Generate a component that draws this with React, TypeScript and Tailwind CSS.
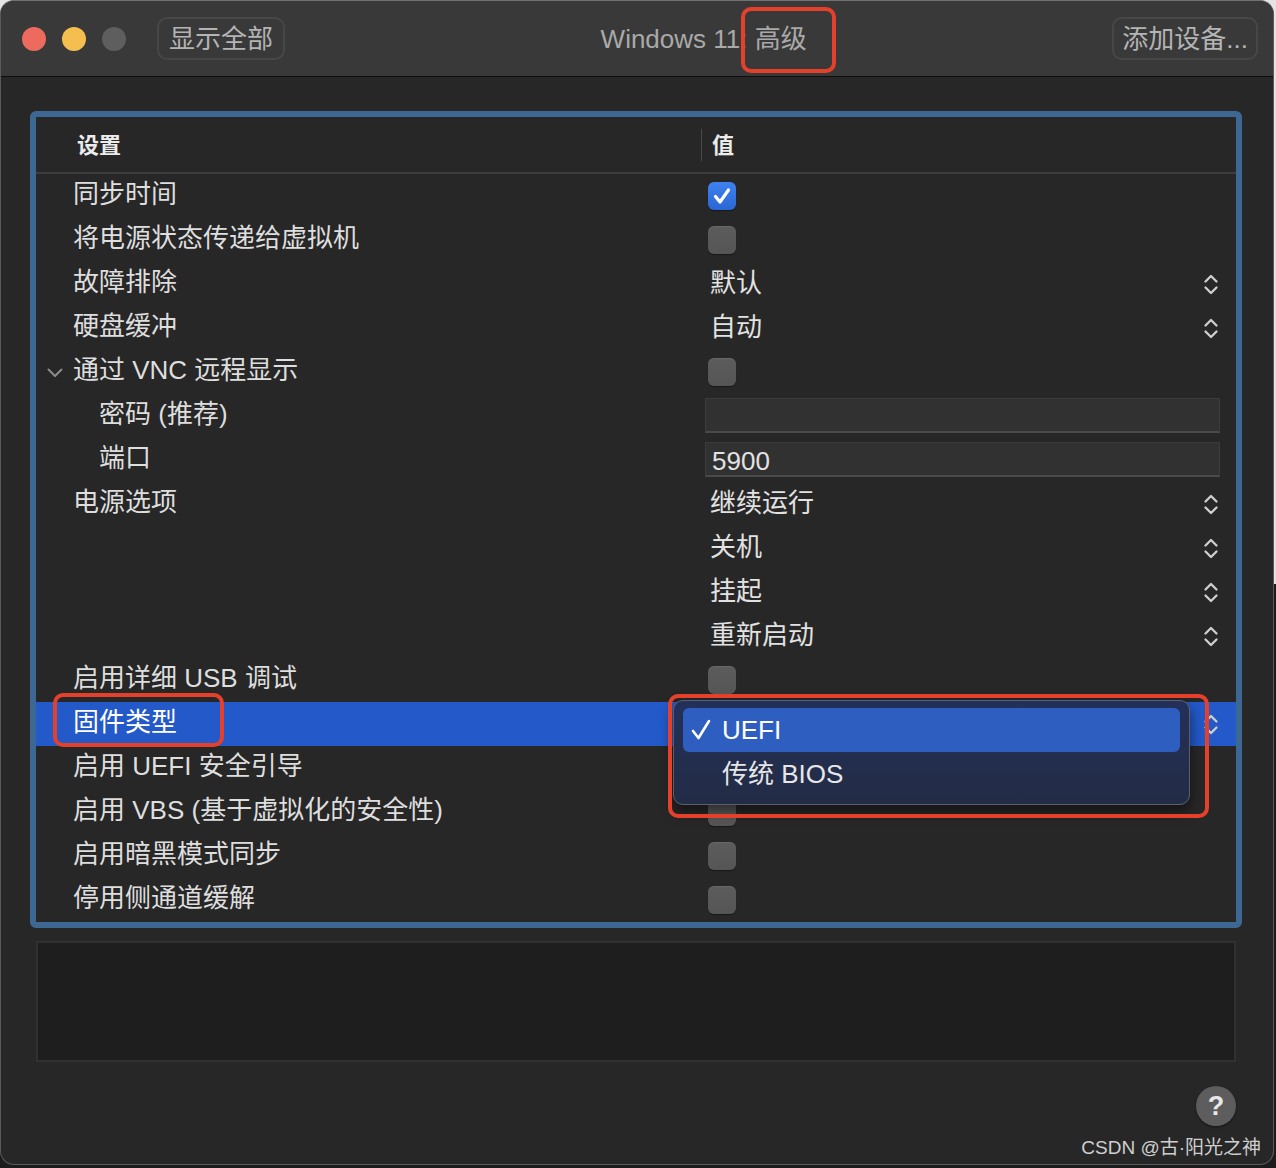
import React from "react";

type Kind = "check" | "checked" | "select" | "input" | "none";
type Row = {
  label?: string;
  indent?: boolean;
  disclosure?: boolean;
  kind: Kind;
  value?: string;
  selected?: boolean;
};

const rows: Row[] = [
  { label: "同步时间", kind: "checked" },
  { label: "将电源状态传递给虚拟机", kind: "check" },
  { label: "故障排除", kind: "select", value: "默认" },
  { label: "硬盘缓冲", kind: "select", value: "自动" },
  { label: "通过 VNC 远程显示", kind: "check", disclosure: true },
  { label: "密码 (推荐)", kind: "input", value: "", indent: true },
  { label: "端口", kind: "input", value: "5900", indent: true },
  { label: "电源选项", kind: "select", value: "继续运行" },
  { kind: "select", value: "关机" },
  { kind: "select", value: "挂起" },
  { kind: "select", value: "重新启动" },
  { label: "启用详细 USB 调试", kind: "check" },
  { label: "固件类型", kind: "select", value: "", selected: true },
  { label: "启用 UEFI 安全引导", kind: "check" },
  { label: "启用 VBS (基于虚拟化的安全性)", kind: "check" },
  { label: "启用暗黑模式同步", kind: "check" },
  { label: "停用侧通道缓解", kind: "check" },
];

const FONT = {
  fontFamily: '"Liberation Sans", "Noto Sans CJK SC", sans-serif',
};

function UpDown({ color = "#cfcfcf" }: { color?: string }) {
  return (
    <svg width="16" height="23" viewBox="0 0 16 23" fill="none">
      <path d="M2.5 8.5 L8 3 L13.5 8.5" stroke={color} strokeWidth="2.3" strokeLinecap="round" strokeLinejoin="round" />
      <path d="M2.5 14.5 L8 20 L13.5 14.5" stroke={color} strokeWidth="2.3" strokeLinecap="round" strokeLinejoin="round" />
    </svg>
  );
}

function CheckBox({ checked }: { checked: boolean }) {
  if (checked) {
    return (
      <div className="w-[28px] h-[28px] rounded-[6px] bg-[linear-gradient(to_bottom,#3f82ef,#2a66d4)] flex items-center justify-center shadow-[0_1px_1px_rgba(0,0,0,0.4)]">
        <svg width="28" height="28" viewBox="0 0 28 28" fill="none">
          <path d="M7.5 14.5 L12 20 L20.5 8" stroke="#ffffff" strokeWidth="3.2" strokeLinecap="round" strokeLinejoin="round" />
        </svg>
      </div>
    );
  }
  return (
    <div className="w-[28px] h-[28px] rounded-[6px] bg-[linear-gradient(to_bottom,#5c5c5c,#555555)] shadow-[inset_0_1px_0_rgba(255,255,255,0.08),0_1px_1px_rgba(0,0,0,0.4)]" />
  );
}

function TrafficLights() {
  return (
    <div className="flex items-center gap-[16px]">
      <div className="w-[24px] h-[24px] rounded-full bg-[#ec6a5e]" />
      <div className="w-[24px] h-[24px] rounded-full bg-[#f4bf4f]" />
      <div className="w-[24px] h-[24px] rounded-full bg-[#5e5e5e]" />
    </div>
  );
}

function ValueCell({ row }: { row: Row }) {
  if (row.kind === "checked" || row.kind === "check") {
    return (
      <div className="pl-[6px] flex items-center h-full">
        <CheckBox checked={row.kind === "checked"} />
      </div>
    );
  }
  if (row.kind === "select") {
    return (
      <div className="pl-[8px] pr-[17px] flex items-center justify-between h-full">
        <span className="text-[26px] leading-none text-[#e2e2e2] pb-[2px]">{row.value}</span>
        <UpDown />
      </div>
    );
  }
  if (row.kind === "input") {
    return (
      <div className="pl-[3px] pr-[16px] pt-[4px] pb-[5px] h-full">
        <div className="h-full bg-[#313131] border border-[#3c3c3c] border-b-2 border-b-[#4a4a4a] flex items-center pl-[6px]">
          <span className="text-[26px] leading-none text-[#e2e2e2] pt-[3px]">{row.value}</span>
        </div>
      </div>
    );
  }
  return null;
}

export default function App() {
  return (
    <div
      className="w-[1276px] h-[1168px] bg-[linear-gradient(to_bottom,#e4e4e4_0%,#e4e4e4_50%,#1c1c1c_50%,#1c1c1c_100%)]"
      style={FONT}
    >
      <div className="w-[1274px] h-[1165px] rounded-[14px] overflow-hidden bg-[#272727] border border-[#5a5a5a] border-t-[#727272] flex flex-col">
        {/* Title bar */}
        <div className="h-[76px] shrink-0 bg-[#393939] border-b border-b-[#0e0e0e] flex items-center pl-[21px] pr-[15px]">
          <TrafficLights />
          <div className="ml-[31px] h-[43px] px-[10px] rounded-[10px] border-2 border-[#474747] flex items-center text-[26px] leading-none text-[#b4b4b4]">
            显示全部
          </div>
          <div className="flex-1 flex justify-center pl-[10px]">
            <div className="relative text-[26px] leading-none text-[#a9a9a9]">
              Windows 11: 高级
              <div className="absolute left-[140px] top-[-19px] w-[95px] h-[66px] border-[4px] border-[#e5402b] rounded-[10px]" />
            </div>
          </div>
          <div className="h-[43px] px-[8px] rounded-[10px] border-2 border-[#474747] flex items-center text-[26px] leading-none text-[#b4b4b4]">
            添加设备...
          </div>
        </div>

        {/* Body */}
        <div className="flex-1 flex flex-col pt-[34px]">
          {/* Table frame */}
          <div className="ml-[29px] mr-[31px] h-[817px] border-[6px] border-[#3d6894] rounded-[6px] bg-[#272727]">
            <div className="relative h-full">
              {/* Header */}
              <div className="h-[55px] flex items-center border-b-2 border-b-[#3d3d3d] box-content">
                <div className="w-[665px] pl-[41px] pt-[3px] text-[22px] font-bold text-[#ececec] leading-none">设置</div>
                <div className="w-[1px] h-[32px] bg-[#4a4a4a]" />
                <div className="pl-[10px] pt-[3px] text-[22px] font-bold text-[#ececec] leading-none">值</div>
              </div>
              {/* Rows */}
              <div className="flex flex-col">
                {rows.map((r, i) => (
                  <div
                    key={i}
                    className={
                      "h-[44px] flex " + (r.selected ? "bg-[#2359c9]" : "")
                    }
                  >
                    <div className="w-[666px] relative flex items-center">
                      {r.disclosure && (
                        <svg className="absolute left-[11px] top-[18px]" width="16" height="10" viewBox="0 0 16 10" fill="none">
                          <path d="M1.5 1.5 L8 8 L14.5 1.5" stroke="#8c8c8c" strokeWidth="2" strokeLinecap="round" strokeLinejoin="round" />
                        </svg>
                      )}
                      {r.label && (
                        <span
                          className={
                            "text-[26px] leading-none pb-[5px] " +
                            (r.indent ? "pl-[63px] " : "pl-[37px] ") +
                            (r.selected ? "text-[#ffffff]" : "text-[#dedede]")
                          }
                        >
                          {r.label}
                        </span>
                      )}
                    </div>
                    <div className="flex-1">
                      <ValueCell row={r} />
                    </div>
                  </div>
                ))}
              </div>

              {/* Red annotation box around 固件类型 */}
              <div className="absolute left-[17px] top-[576px] w-[171px] h-[54px] border-[4px] border-[#e5402b] rounded-[10px]" />

              {/* Popup menu */}
              <div className="absolute left-[637px] top-[583px] w-[517px] h-[105px] rounded-[10px] bg-[linear-gradient(to_bottom,#23305a,#232c45)] border border-[#5a6070] shadow-[0_6px_14px_rgba(0,0,0,0.55)] px-[9px] pt-[7px]">
                <div className="h-[44px] rounded-[6px] bg-[#2f5ec1] flex items-center pl-[8px]">
                  <svg className="mr-[11px]" width="20" height="22" viewBox="0 0 20 22" fill="none">
                    <path d="M2 12 L7.5 19 L18 2" stroke="#ffffff" strokeWidth="2.6" strokeLinecap="round" strokeLinejoin="round" />
                  </svg>
                  <span className="text-[26px] leading-none text-white">UEFI</span>
                </div>
                <div className="h-[44px] flex items-center pl-[39px]">
                  <span className="text-[26px] leading-none text-[#e6e6e6]">传统 BIOS</span>
                </div>
              </div>

              {/* Red annotation box around menu */}
              <div className="absolute left-[632px] top-[577px] w-[541px] h-[124px] border-[4px] border-[#e5402b] rounded-[10px]" />
            </div>
          </div>

          {/* Bottom panel */}
          <div className="mt-[13px] ml-[35px] mr-[37px] h-[121px] bg-[#1e1e1e] border-2 border-[#303030]" />

          {/* Help */}
          <div className="mt-[24px] mr-[37px] flex justify-end">
            <div className="w-[40px] h-[40px] rounded-full bg-[#5d5d5d] flex items-center justify-center shadow-[0_1px_2px_rgba(0,0,0,0.5)]">
              <span className="text-[27px] leading-none font-bold text-[#e8e8e8]">?</span>
            </div>
          </div>

          {/* Watermark */}
          <div className="mt-[12px] mr-[12px] flex justify-end">
            <span className="text-[19px] leading-none text-[#cfcfcf]">CSDN @古·阳光之神</span>
          </div>
        </div>
      </div>
    </div>
  );
}
